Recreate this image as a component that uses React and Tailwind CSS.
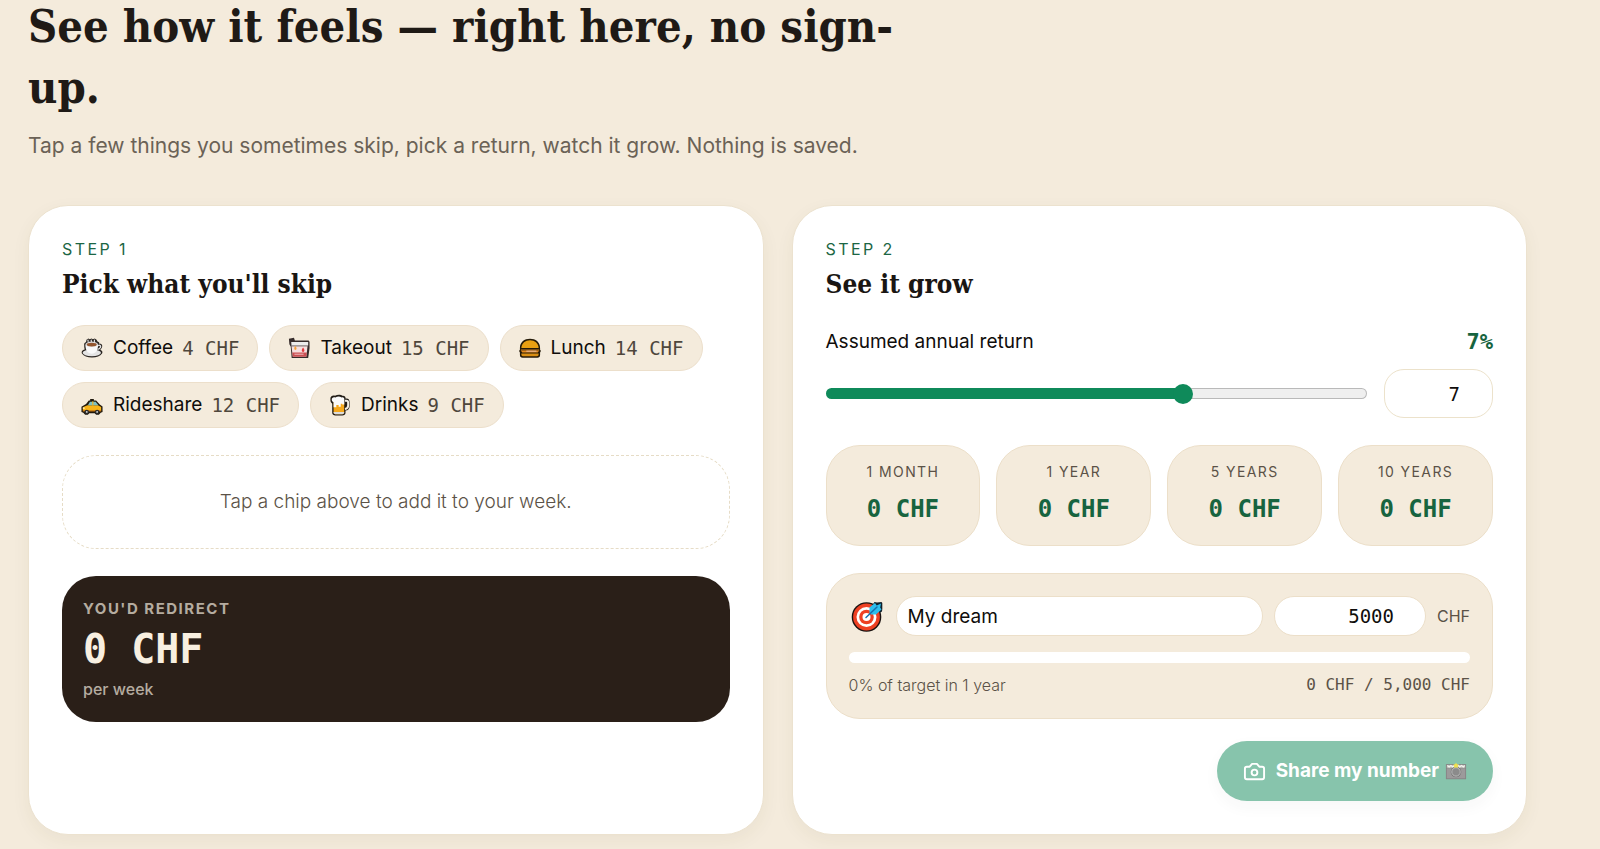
import { useState } from "react";

function CoffeeIcon() {
  return (
    <svg viewBox="0 0 24 24" className="size-[22px]" aria-hidden="true">
      <path d="M3.500 9 C3 7 4.500 6 5.500 5.500 L6 3 L8 1.500 L9.500 2.500 L11.500 1.500 L13 2.500 L15 1.500 L17 3 L18 5 C20 5.500 20 6.500 20 7.500 C23 7 24 10 22.500 12 c-.4 1-1 1.600-1.500 2 c2 .7 3 2.500 2 4 c-2 3-6 4.300-11 4.300 S3 21 1 18 c-1-2 .5-4 3-4.500 C3.500 12 3.500 10.500 3.500 9Z" fill="#2a2521" />
      <ellipse cx="11.800" cy="17.300" rx="10" ry="3.700" fill="#e4e4e4" />
      <path d="M4.800 8.500 c0 6 2.500 9.800 6.900 9.800 s6.900-3.800 6.900-9.800Z" fill="#f9f9f9" />
      <path d="M18.600 9.500 c2-1.200 3.400.2 2.500 2 c-.5 1-1.700 1.700-3.200 2" fill="none" stroke="#e2e2e2" strokeWidth="1.500" />
      <ellipse cx="11.700" cy="8" rx="6.900" ry="3" fill="#dedede" />
      <ellipse cx="11.700" cy="8.300" rx="5.500" ry="2" fill="#94562f" />
      <path d="M8 5.500 q-1-1.500 0-2.500 M11.500 5.500 q-1-1.500 0-2.500 M15 5.500 q-1-1.500 0-2.500" fill="none" stroke="#e8e8e8" strokeWidth="1.200" />
    </svg>
  );
}

function TakeoutIcon() {
  return (
    <svg viewBox="0 0 24 24" className="size-[22px]" aria-hidden="true">
      <path d="M1 2 L6.500 .8 L7.500 3.800 h15 l1 1.500 v7 l-1.500 10.700 H4 L3 10.500 L1.500 8Z" fill="#352b2a" />
      <path d="M3.800 10 h17.500 l-1.300 11.500 H5.200Z" fill="#f6e0e0" />
      <path d="M4.600 17 h16 l-.6 4.500 H5.200Z" fill="#cb5054" />
      <path d="M3.500 5.500 h18.500 v3.800 H3.800Z" fill="#ececec" />
      <path d="M3.800 9.500 h18" stroke="#a8a0a0" strokeWidth="1" />
      <path d="M16.500 11.500 c-2 2.500-2 4-.2 5 c2.200-.6 2-2.600.2-5Z" fill="#e2383f" />
      <path d="M8 9.800 c-1.700 2-1.500 3.700 0 4.500 c1.800-.7 1.700-2.500 0-4.500Z" fill="#f4a23a" />
      <path d="M7 18.800 h10" stroke="#f3c5c5" strokeWidth="1" />
    </svg>
  );
}

function BurgerIcon() {
  return (
    <svg viewBox="0 0 24 24" className="size-[22px]" aria-hidden="true">
      <path d="M1 12 C1 5.500 6 2 12 2 s11 3.500 11 10 v2 c1 .8 1 2 0 3 v2.500 c0 2-1 3-3 3 H4 c-2 0-3-1-3-3 V17 c-1-1-1-2.200 0-3Z" fill="#241a08" />
      <path d="M2.600 12 C2.800 6.700 7 3.600 12 3.600 s9.200 3.100 9.400 8.400Z" fill="#e9a012" />
      <path d="M2 13.300 h20 v1.500 H2Z" fill="#8d5a1b" />
      <path d="M2 14.700 h20 l-1.500 2.100 H3.500Z" fill="#e68a1e" />
      <path d="M8 15.500 h11" stroke="#e8b48e" strokeWidth="1.300" />
      <path d="M2.600 18 h18.800 v1.400 c0 1-.7 1.600-1.700 1.600 H4.300 c-1 0-1.700-.6-1.700-1.600Z" fill="#d98d12" />
    </svg>
  );
}

function TaxiIcon() {
  return (
    <svg viewBox="0 0 24 24" className="size-[22px]" aria-hidden="true">
      <path d="M5.500 11 l3-4 h1.500 V5.500 h4 V7 h2.500 l4 4.500 l3 2 v6 l-2 1 l-2 2 h-3 l-1.500-1.500 H9 L7.500 22.500 h-3 l-2-2 L.5 19.500 v-5.500Z" fill="#20190d" />
      <path d="M2 14.500 l5-2.200 h11.500 l3.500 1.900 v4 H2Z" fill="#f7b318" />
      <path d="M7.500 12.300 l2.200-3.800 h6.300 l3 3.800Z" fill="#7cc0c4" />
      <path d="M12.300 8 h1.200 v4.500 h-1.200Z" fill="#f7b318" />
      <path d="M2 18 h20 v1 H2Z" fill="#dc7d12" />
      <circle cx="6.300" cy="19.500" r="2.400" fill="#2b2b2b" />
      <circle cx="17.600" cy="19.500" r="2.400" fill="#2b2b2b" />
      <circle cx="6.300" cy="19.500" r="1" fill="#d8d8d8" />
      <circle cx="17.600" cy="19.500" r="1" fill="#d8d8d8" />
      <path d="M2 14.700 h2 v1.500 H2Z" fill="#fff3c4" />
    </svg>
  );
}

function BeerIcon() {
  return (
    <svg viewBox="0 0 24 24" className="size-[22px]" aria-hidden="true">
      <path d="M1.500 6 C1 3 4 1 6.500 2 C9 .5 13 .5 14.500 2 C17 1.500 18.500 3.500 18 5 h1 c2.500 0 3.500 1.700 3.500 4.500 v3.500 c0 3-1.500 4.800-4.500 5 v2.500 c0 2-1.500 3-3.500 3 H7 c-2 0-3.500-1-3.500-3 V10.500 C2 9.500 1.500 8 1.500 6Z" fill="#211c16" />
      <path d="M5 9 h11.600 v11 c0 1.200-.8 2-2 2 H7 c-1.200 0-2-.8-2-2Z" fill="#f5a81c" />
      <path d="M17.300 7.300 h1.700 c1.400 0 1.900.7 1.900 2.200 v3 c0 2-1.300 3.500-3.500 3.800" fill="none" stroke="#f2ede2" strokeWidth="2.200" />
      <path d="M3 6 C2.800 4 5 2.800 7 3.800 C9 2.300 12 2.300 13.700 3.700 C15.500 3 17 4.200 16.700 6 V11.500 h-2.200 v-1 h-1.700 v3.500 H10.500 V12 H8 v2.500 H5 V9 C3.800 8.500 3 7.500 3 6Z" fill="#fafafa" />
      <path d="M5 19.700 h11.600 v.6 c0 1-.8 1.700-2 1.700 H7 c-1.200 0-2-.7-2-1.700Z" fill="#dcdcdc" />
    </svg>
  );
}

function TargetIcon() {
  return (
    <svg viewBox="0 0 32 32" className="size-8" aria-hidden="true">
      <circle cx="15.500" cy="17" r="14.800" fill="#1a1210" />
      <path d="M20 7 L23.500 2 l2.500 .5 l4.500-.5 l.8 1 v6 l-.3 2.500 l-5 3Z" fill="#10202b" />
      <circle cx="15.500" cy="17" r="13.400" fill="#ee4023" />
      <circle cx="15.500" cy="17" r="10" fill="#fff" />
      <circle cx="15.500" cy="17" r="7.300" fill="#ee4023" />
      <circle cx="15.500" cy="17" r="4" fill="#fff" />
      <path d="M18.500 13 v-5.500 L24 3 l1.700 2.500 L30 3.500 l-.8 4 l1.300 2 l-5.500 5 h-5Z" fill="#2cbfee" />
      <path d="M15 17.500 L26 7" stroke="#176fae" strokeWidth="1.500" strokeLinecap="round" />
    </svg>
  );
}

function CameraIcon() {
  return (
    <svg viewBox="0 0 24 24" className="size-[23px]" fill="none" stroke="currentColor" strokeWidth="2" strokeLinecap="round" strokeLinejoin="round" aria-hidden="true">
      <path d="M14.500 4 h-5 L7 7 H4 a2 2 0 0 0-2 2 v9 a2 2 0 0 0 2 2 h16 a2 2 0 0 0 2-2 V9 a2 2 0 0 0-2-2 h-3 l-2.500-3Z" />
      <circle cx="12" cy="13" r="3" />
    </svg>
  );
}

function FlashCameraIcon() {
  return (
    <svg viewBox="0 0 24 24" className="size-[22px]" aria-hidden="true">
      <path d="M1 4.500 h22 v16.500 H1Z" fill="#868485" />
      <path d="M2 9.500 h20 v10.500 H2Z" fill="#9c9a9b" />
      <path d="M2 5.500 h20 v3.500 H2Z" fill="#b7b7b2" />
      <path d="M2.500 6 l2 1.500 l2-1.500 l2 1.500 l2-1.500 h4 l1.500 1.500 l2-1.500 l2 1.500 l1.500-1.500" fill="none" stroke="#f3f3ee" strokeWidth="1.400" />
      <circle cx="12" cy="13" r="5.800" fill="#777" />
      <circle cx="12" cy="13" r="4.600" fill="#8b8b8b" stroke="#bdbdbd" strokeWidth="1" />
      <path d="M12 3 l1.100 1.700 l2 .4 l-1.200 1.500 l.2 2 l-2.100-.8 l-2.100.8 l.2-2 L8.900 5.100 l2-.4Z" fill="#efe24c" />
    </svg>
  );
}

const ITEMS = [
  { name: "Coffee", price: 4, Icon: CoffeeIcon },
  { name: "Takeout", price: 15, Icon: TakeoutIcon },
  { name: "Lunch", price: 14, Icon: BurgerIcon },
  { name: "Rideshare", price: 12, Icon: TaxiIcon },
  { name: "Drinks", price: 9, Icon: BeerIcon },
];

const PERIODS = [
  { label: "1 month", weeks: 52 / 12, years: 1 / 12 },
  { label: "1 year", weeks: 52, years: 1 },
  { label: "5 years", weeks: 260, years: 5 },
  { label: "10 years", weeks: 520, years: 10 },
];

const MIN_RATE = 1;
const MAX_RATE = 10;

const chf = (n) => `${Math.round(n).toLocaleString("en-US")} CHF`;

function grow(weekly, rate, { weeks, years }) {
  return weekly * weeks * Math.pow(1 + rate / 100, years / 2);
}

function Card({ step, title, children }) {
  return (
    <section className="rounded-[40px] border border-[#ece2cf] bg-white p-[33px] shadow-[0_6px_18px_rgba(90,80,30,0.06)]">
      <p className="text-base leading-5 tracking-[0.15em] text-[#1c6644] uppercase">{step}</p>
      <h2 className="mt-2 font-['DejaVu_Serif_Condensed','DejaVu_Serif',serif] text-[26px] leading-[34px] font-bold text-[#1a1613]">{title}</h2>
      {children}
    </section>
  );
}

export default function App() {
  const [picked, setPicked] = useState([]);
  const [rate, setRate] = useState(7);
  const [dream, setDream] = useState("My dream");
  const [target, setTarget] = useState(5000);

  const weekly = picked.reduce((sum, name) => sum + ITEMS.find((i) => i.name === name).price, 0);
  const year = grow(weekly, rate, PERIODS[1]);
  const progress = target > 0 ? Math.min(100, Math.round((year / target) * 100)) : 0;
  const share = Math.min(1, Math.max(0, (rate - MIN_RATE) / (MAX_RATE - MIN_RATE)));
  const trackFill = `linear-gradient(#0f8a5a, #0f8a5a) 0 0 / calc(10px + (100% - 20px) * ${share}) 100% no-repeat border-box, linear-gradient(#efefef, #efefef) padding-box, linear-gradient(#b9b9b9, #b9b9b9) border-box`;

  return (
    <main className="min-h-screen overflow-hidden bg-[#f4ebdc] pr-[73px] pb-4 pl-7 font-['Inter',sans-serif] text-[#0f0d0b]">
      <header className="-mt-1 max-w-[920px]">
        <h1 className="font-['DejaVu_Serif_Condensed','DejaVu_Serif',serif] text-[45px] leading-[61px] font-bold text-[#1f1a16]">
          See how it feels — right here, no sign-up.
        </h1>
        <p className="mt-3 text-[21px] leading-8 text-[#6b6256]">
          Tap a few things you sometimes skip, pick a return, watch it grow. Nothing is saved.
        </p>
      </header>

      <div className="mt-[43px] grid grid-cols-2 gap-7">
        <Card step="Step 1" title="Pick what you'll skip">
          <div className="mt-6 flex flex-wrap gap-[11px]">
            {ITEMS.map(({ name, price, Icon }) => (
              <button
                key={name}
                type="button"
                onClick={() => setPicked([...picked, name])}
                className="flex h-[46px] items-center rounded-full border border-[#ecdfcb] bg-[#f4ebdc] px-[18px] text-[19px]"
              >
                <Icon />
                <span className="ml-2.5">{name}</span>
                <span className="ml-[9px] font-['DejaVu_Sans_Mono',monospace] text-[#4f473c]">{price} CHF</span>
              </button>
            ))}
          </div>

          <div className="mt-[27px] flex min-h-[94px] items-center justify-center rounded-[34px] border border-dashed border-[#e6dcc6] px-6 text-center text-[19px] font-light text-[#5b5247]">
            {picked.length === 0 ? "Tap a chip above to add it to your week." : picked.join(", ")}
          </div>

          <div className="mt-[27px] rounded-[34px] bg-[#2a1f18] p-[21px]">
            <p className="text-[15px] leading-6 font-bold tracking-widest text-[#b5aca0] uppercase">You'd redirect</p>
            <p className="mt-1 font-['DejaVu_Sans_Mono',monospace] text-[40px] leading-[48px] font-bold text-[#f8efe0]">{chf(weekly)}</p>
            <p className="mt-1 text-base leading-6 font-medium text-[#b5aca0]">per week</p>
          </div>
        </Card>

        <Card step="Step 2" title="See it grow">
          <div className="mt-[27px] flex items-center justify-between leading-7">
            <label htmlFor="rate" className="text-[19px]">Assumed annual return</label>
            <output htmlFor="rate" className="font-['DejaVu_Sans_Mono',monospace] text-[22px] font-bold text-[#17643f]">{rate}%</output>
          </div>
          <div className="mt-[13px] flex items-center gap-[17px]">
            <input
              id="rate"
              type="range"
              min={MIN_RATE}
              max={MAX_RATE}
              step="0.5"
              value={rate}
              onChange={(e) => setRate(Number(e.target.value))}
              style={{ background: trackFill }}
              className="h-[11px] min-w-0 flex-1 appearance-none rounded-full border border-transparent [&::-webkit-slider-thumb]:size-5 [&::-webkit-slider-thumb]:appearance-none [&::-webkit-slider-thumb]:rounded-full [&::-webkit-slider-thumb]:bg-[#0f8a5a]"
            />
            <input
              type="number"
              aria-label="Annual return in percent"
              value={rate}
              onChange={(e) => setRate(Number(e.target.value))}
              className="h-[49px] w-[109px] appearance-none rounded-[20px] border border-[#ece2cb] bg-white pr-8 text-right font-['DejaVu_Sans_Mono',monospace] text-[19px] [-moz-appearance:textfield] [&::-webkit-inner-spin-button]:appearance-none"
            />
          </div>

          <div className="mt-[27px] grid grid-cols-4 gap-4">
            {PERIODS.map((p) => (
              <div key={p.label} className="rounded-[34px] border border-[#ecdfc9] bg-[#f4ebdc] py-4 text-center">
                <p className="text-sm leading-5 tracking-widest text-[#5b5247] uppercase">{p.label}</p>
                <p className="mt-2 font-['DejaVu_Sans_Mono',monospace] text-2xl leading-[39px] font-bold text-[#17643f]">
                  {chf(grow(weekly, rate, p))}
                </p>
              </div>
            ))}
          </div>

          <div className="mt-[27px] rounded-[34px] border border-[#ecdfc9] bg-[#f4ebdc] p-[22px]">
            <div className="flex items-center gap-[11px]">
              <span className="flex w-9 justify-center">
                <TargetIcon />
              </span>
              <input
                type="text"
                aria-label="Name of your goal"
                value={dream}
                onChange={(e) => setDream(e.target.value)}
                className="h-10 min-w-0 flex-1 rounded-full border border-[#ecdfc9] bg-white px-[11px] text-[19px]"
              />
              <input
                id="target"
                type="number"
                value={target}
                onChange={(e) => setTarget(Number(e.target.value))}
                className="h-10 w-[152px] appearance-none rounded-full border border-[#ecdfc9] bg-white pr-[31px] text-right font-['DejaVu_Sans_Mono',monospace] text-[19px] [-moz-appearance:textfield] [&::-webkit-inner-spin-button]:appearance-none"
              />
              <label htmlFor="target" className="text-base text-[#5b5247]">CHF</label>
            </div>
            <div className="mt-4 h-[11px] overflow-hidden rounded-full bg-white">
              <div className="h-full rounded-full bg-[#0f8a5a]" style={{ width: `${progress}%` }} />
            </div>
            <div className="mt-[11px] flex justify-between text-base leading-[22px] text-[#5b5247]">
              <span className="font-light">{progress}% of target in 1 year</span>
              <span className="font-['DejaVu_Sans_Mono',monospace]">{chf(year)} / {chf(target)}</span>
            </div>
          </div>

          <div className="mt-[22px] flex justify-end">
            <button
              type="button"
              className="flex h-[60px] items-center rounded-full bg-[#87c4ac] px-[26px] text-[19px] font-bold text-white shadow-[0_6px_16px_rgba(40,60,50,0.04)]"
            >
              <CameraIcon />
              <span className="mr-1.5 ml-2.5">Share my number</span>
              <FlashCameraIcon />
            </button>
          </div>
        </Card>
      </div>
    </main>
  );
}
